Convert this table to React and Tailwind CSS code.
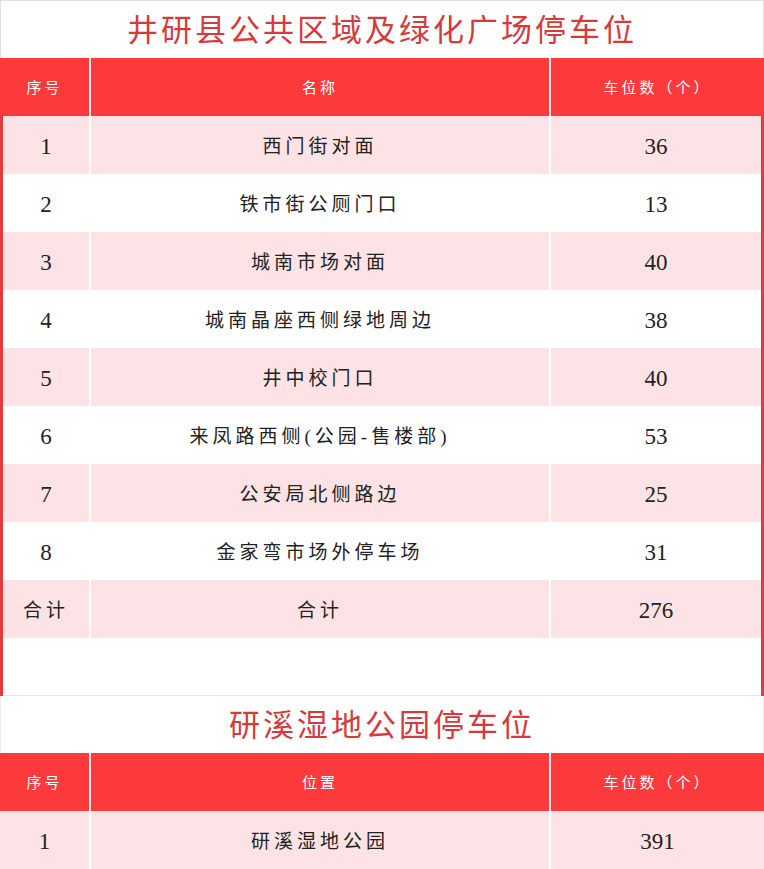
const rows = [
  { no: "1", name: "西门街对面", count: "36" },
  { no: "2", name: "铁市街公厕门口", count: "13" },
  { no: "3", name: "城南市场对面", count: "40" },
  { no: "4", name: "城南晶座西侧绿地周边", count: "38" },
  { no: "5", name: "井中校门口", count: "40" },
  { no: "6", name: "来凤路西侧(公园-售楼部)", count: "53" },
  { no: "7", name: "公安局北侧路边", count: "25" },
  { no: "8", name: "金家弯市场外停车场", count: "31" },
  { no: "合计", name: "合计", count: "276" },
];

const font = { fontFamily: '"Liberation Serif", "Noto Sans CJK SC", serif' };

const HeaderRow = ({ middle }) => (
  <div className="grid grid-cols-[89px_458px_1fr] gap-x-[2px] bg-[#fbe9e9] text-white text-[15px] tracking-[3px]">
    <div className="h-[58px] bg-[#fd3a3b] flex items-center justify-center pt-[2px]">序号</div>
    <div className="h-[58px] bg-[#fd3a3b] flex items-center justify-center pt-[2px]">{middle}</div>
    <div className="h-[58px] bg-[#fd3a3b] flex items-center justify-center pt-[2px]">车位数（个）</div>
  </div>
);

const DataRow = ({ row, pink }) => {
  const bg = pink ? "bg-[#fde3e5]" : "bg-white";
  const numeric = /^\d+$/.test(row.no);
  return (
    <div className="grid grid-cols-[86px_458px_1fr] gap-x-[2px] bg-white text-[19px] text-[#222]">
      <div
        className={`h-[58px] ${bg} flex items-center justify-center pt-[4px] ${
          numeric ? "text-[23px]" : "tracking-[4px]"
        }`}
      >
        {row.no}
      </div>
      <div className={`h-[58px] ${bg} flex items-center justify-center pt-[4px] tracking-[4px]`}>{row.name}</div>
      <div className={`h-[58px] ${bg} flex items-center justify-center pt-[4px] text-[23px]`}>{row.count}</div>
    </div>
  );
};

export default function App() {
  return (
    <div className="w-[764px] h-[869px] overflow-hidden bg-white" style={font}>
      <div className="h-[58px] border-t border-x border-[#e2e2e2] flex items-center justify-center pt-[4px] text-[31px] text-[#d63a3c] tracking-[3px]">
        井研县公共区域及绿化广场停车位
      </div>
      <HeaderRow middle="名称" />
      <div className="border-x-[3px] border-[#e23a3e]">
        {rows.map((r, i) => (
          <DataRow key={i} row={r} pink={i % 2 === 0} />
        ))}
        <div className="h-[58px] bg-white border-b border-[#e5e5e5]" />
      </div>
      <div className="h-[57px] border-x border-[#ececec] flex items-center justify-center pt-[4px] text-[31px] text-[#d63a3c] tracking-[3px]">
        研溪湿地公园停车位
      </div>
      <HeaderRow middle="位置" />
      <div className="grid grid-cols-[89px_458px_1fr] gap-x-[2px] bg-white text-[19px] text-[#222]">
        <div className="h-[58px] bg-[#fde3e5] flex items-center justify-center pt-[4px] text-[23px]">1</div>
        <div className="h-[58px] bg-[#fde3e5] flex items-center justify-center pt-[4px] tracking-[4px]">研溪湿地公园</div>
        <div className="h-[58px] bg-[#fde3e5] flex items-center justify-center pt-[4px] text-[23px]">391</div>
      </div>
    </div>
  );
}
